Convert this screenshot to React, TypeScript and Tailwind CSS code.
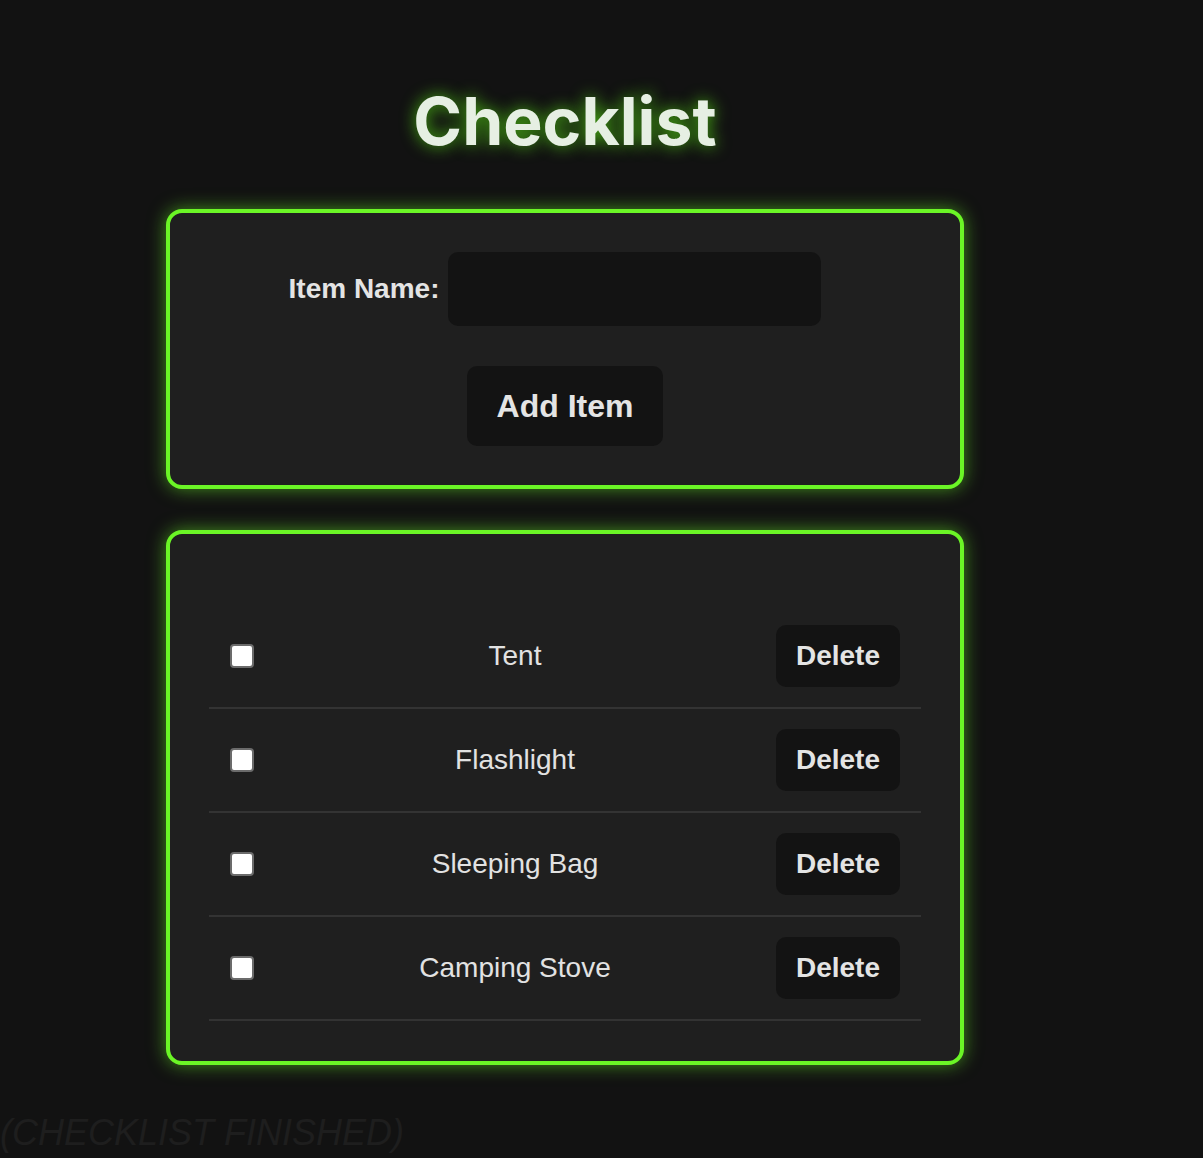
import React, { useState } from 'react';

interface Item {
  id: number;
  name: string;
  done: boolean;
}

const initialItems: Item[] = [
  { id: 1, name: 'Tent', done: false },
  { id: 2, name: 'Flashlight', done: false },
  { id: 3, name: 'Sleeping Bag', done: false },
  { id: 4, name: 'Camping Stove', done: false },
];

const App: React.FC = () => {
  const [items, setItems] = useState<Item[]>(initialItems);
  const [name, setName] = useState('');

  const addItem = () => {
    if (!name.trim()) return;
    setItems([...items, { id: Date.now(), name: name.trim(), done: false }]);
    setName('');
  };

  const toggle = (id: number) =>
    setItems(items.map((i) => (i.id === id ? { ...i, done: !i.done } : i)));

  const remove = (id: number) => setItems(items.filter((i) => i.id !== id));

  const card =
    'w-[798px] ml-[166px] bg-[#1f1f1f] border-4 border-[#6bf526] rounded-[16px] shadow-[0_0_18px_rgba(107,245,38,0.55)]';

  return (
    <div className="min-h-screen bg-[#121212] text-[#e2e2e2] font-['Liberation_Sans',Arial,sans-serif] overflow-hidden">
      <div className="w-[798px] ml-[166px] pt-[82px] pb-[48px] text-center">
        <h1 className="text-[66px] leading-[79px] font-bold text-[#e6efe3] font-['Inter',sans-serif] [text-shadow:0_0_16px_rgba(80,200,20,0.9)]">
          Checklist
        </h1>
      </div>

      <div className={`${card} px-[39px] py-[39px] flex flex-col items-center gap-[40px]`}>
        <div className="flex items-center justify-center gap-[9px] w-full pr-[20px]">
          <label className="text-[28px] font-bold text-[#e4e4e4]">Item Name:</label>
          <input
            type="text"
            value={name}
            onChange={(e) => setName(e.target.value)}
            className="w-[373px] h-[74px] bg-[#131313] rounded-[10px] px-4 text-[24px] text-[#e2e2e2] outline-none"
          />
        </div>
        <button
          onClick={addItem}
          className="w-[196px] h-[80px] bg-[#131313] rounded-[10px] text-[32px] font-bold text-[#e4e4e4]"
        >
          Add Item
        </button>
      </div>

      <div className={`${card} mt-[41px] px-[39px] pt-[71px] pb-[40px]`}>
        <ul>
          {items.map((item) => (
            <li
              key={item.id}
              className="flex items-center py-5 pl-[21px] pr-[21px] border-b-2 border-[#333333]"
            >
              <input
                type="checkbox"
                checked={item.done}
                onChange={() => toggle(item.id)}
                className="appearance-none w-6 h-6 m-0 bg-white border-2 border-[#6b6b6b] rounded-[4px] checked:bg-[#6bf526] cursor-pointer"
              />
              <span className="flex-1 text-center text-[28px] text-[#e2e2e2]">{item.name}</span>
              <button
                onClick={() => remove(item.id)}
                className="h-[62px] w-[124px] bg-[#131313] rounded-[10px] text-[28px] font-bold text-[#e4e4e4]"
              >
                Delete
              </button>
            </li>
          ))}
        </ul>
      </div>

      <p className="mt-[47px] text-[36px] italic text-[#1e1e1e] leading-[41px]">(CHECKLIST FINISHED)</p>
    </div>
  );
};

export default App;
